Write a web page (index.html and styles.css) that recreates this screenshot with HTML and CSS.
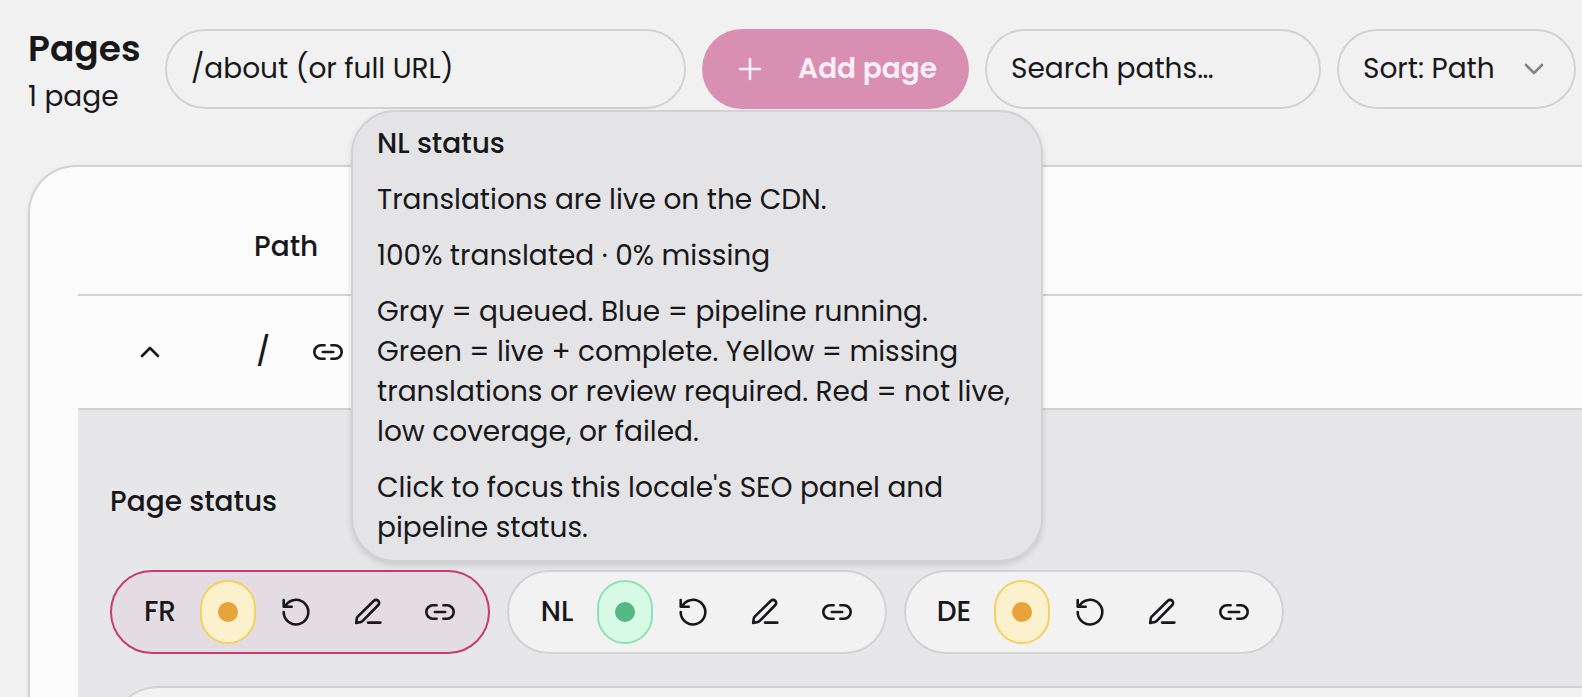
FILE: index.html
```html
<!DOCTYPE html>
<html lang="en">
<head>
    <meta charset="UTF-8">
    <meta name="viewport" content="width=device-width, initial-scale=1.0">
    <title>Pages</title>
    <link rel="stylesheet" href="styles.css">
</head>
<body>
    <!-- Shared icons -->
    <svg class="icon-defs" aria-hidden="true">
        <symbol id="icon-link" viewBox="0 0 32 32">
            <path d="M12.6 9.3H9a6.7 6.7 0 0 0 0 13.4h3.6M19.4 9.3H23a6.7 6.7 0 0 1 0 13.4h-3.6M10.8 16h10.4"/>
        </symbol>
        <symbol id="icon-retry" viewBox="0 0 32 32">
            <path d="M3.7 4v6.8h8M5 10.6A12.3 12.3 0 1 1 3.7 16"/>
        </symbol>
        <symbol id="icon-edit" viewBox="0 0 32 32">
            <path d="M4.2 27l.6-4.6c.1-.7.4-1.3.9-1.8L21.9 4.8a3 3 0 0 1 4.4 4.2L10.5 25.2c-.5.5-1.1.8-1.8.9zM16 26.6h12.4"/>
        </symbol>
    </svg>

    <header class="toolbar">
        <div class="heading">
            <h1>Pages</h1>
            <p>1 page</p>
        </div>
        <input class="field field-url" type="text" aria-label="Page path" placeholder="/about (or full URL)">
        <button class="add-button" type="button">
            <svg class="icon" viewBox="0 0 32 32"><path d="M16 6v20M6 16h20"/></svg>
            Add page
        </button>
        <input class="field field-search" type="text" aria-label="Search paths" placeholder="Search paths…">
        <div class="sort">
            <select class="field" aria-label="Sort">
                <option>Sort: Path</option>
            </select>
            <svg class="icon" viewBox="0 0 32 32"><path d="M8 12l8 8 8-8"/></svg>
        </div>
    </header>

    <main class="card">
        <table class="pages-table">
            <thead>
                <tr>
                    <th class="col-toggle"></th>
                    <th>Path</th>
                </tr>
            </thead>
            <tbody>
                <tr class="page-row">
                    <td class="col-toggle">
                        <button class="icon-button" type="button" aria-label="Collapse">
                            <svg class="icon" viewBox="0 0 32 32"><path d="M8 20l8-8 8 8"/></svg>
                        </button>
                    </td>
                    <td>
                        <div class="path">
                            <span>/</span>
                            <a class="icon-button" href="#" aria-label="Open page"><svg class="icon"><use href="#icon-link"/></svg></a>
                        </div>
                    </td>
                </tr>
                <tr>
                    <td class="details" colspan="2">
                        <h2>Page status</h2>
                        <div class="locales">
                            <div class="locale active">
                                <button class="locale-name" type="button">FR</button>
                                <button class="status yellow" type="button" aria-label="FR status"></button>
                                <button class="icon-button" type="button" aria-label="Retry FR"><svg class="icon"><use href="#icon-retry"/></svg></button>
                                <button class="icon-button" type="button" aria-label="Edit FR"><svg class="icon"><use href="#icon-edit"/></svg></button>
                                <a class="icon-button" href="#" aria-label="Open FR"><svg class="icon"><use href="#icon-link"/></svg></a>
                            </div>
                            <div class="locale">
                                <button class="locale-name" type="button">NL</button>
                                <button class="status green" type="button" aria-label="NL status" aria-describedby="nl-tooltip"></button>
                                <button class="icon-button" type="button" aria-label="Retry NL"><svg class="icon"><use href="#icon-retry"/></svg></button>
                                <button class="icon-button" type="button" aria-label="Edit NL"><svg class="icon"><use href="#icon-edit"/></svg></button>
                                <a class="icon-button" href="#" aria-label="Open NL"><svg class="icon"><use href="#icon-link"/></svg></a>
                                <div class="tooltip" id="nl-tooltip" role="tooltip">
                                    <p class="tooltip-title">NL status</p>
                                    <p>Translations are live on the CDN.</p>
                                    <p>100% translated · 0% missing</p>
                                    <p>Gray = queued. Blue = pipeline running. Green = live + complete. Yellow = missing translations or review required. Red = not live, low coverage, or failed.</p>
                                    <p>Click to focus this locale's SEO panel and pipeline status.</p>
                                </div>
                            </div>
                            <div class="locale">
                                <button class="locale-name" type="button">DE</button>
                                <button class="status yellow" type="button" aria-label="DE status"></button>
                                <button class="icon-button" type="button" aria-label="Retry DE"><svg class="icon"><use href="#icon-retry"/></svg></button>
                                <button class="icon-button" type="button" aria-label="Edit DE"><svg class="icon"><use href="#icon-edit"/></svg></button>
                                <a class="icon-button" href="#" aria-label="Open DE"><svg class="icon"><use href="#icon-link"/></svg></a>
                            </div>
                        </div>
                        <div class="panel"></div>
                    </td>
                </tr>
            </tbody>
        </table>
    </main>
</body>
</html>
```
FILE: styles.css
```css
* {
    box-sizing: border-box;
    margin: 0;
    padding: 0;
}
body {
    height: 100vh;
    overflow: hidden;
    background: #f1f1f1;
    color: #18181b;
    font-family: Poppins, Inter, sans-serif;
    font-size: 28px;
    line-height: 40px;
}
button, input, select {
    font: inherit;
    color: inherit;
}
button {
    border: none;
    background: none;
    cursor: pointer;
}
a {
    color: inherit;
}
.icon-defs {
    position: absolute;
    width: 0;
    height: 0;
}
.icon {
    display: block;
    flex: none;
    width: 32px;
    height: 32px;
    fill: none;
    stroke: currentColor;
    stroke-width: 2.6;
    stroke-linecap: round;
    stroke-linejoin: round;
}

/* Toolbar */
.toolbar {
    display: flex;
    align-items: flex-start;
    gap: 16px;
    padding: 29px 6px 0 28px;
}
.heading {
    flex: none;
    width: 121px;
    height: 80px;
}
.heading h1 {
    font-size: 36px;
    font-weight: 600;
}
.heading p {
    padding-top: 8px;
}
.field {
    min-width: 0;
    height: 80px;
    padding: 0 24px;
    border: 2px solid #d2d2d2;
    border-radius: 40px;
    background: #f1f1f1;
    outline: none;
}
.field::placeholder {
    color: #18181b;
    opacity: 1;
}
.field-url {
    flex: 1 1 520px;
}
.field-search {
    flex: 0 1 336px;
}
.add-button {
    display: flex;
    flex: none;
    align-items: center;
    gap: 32px;
    height: 80px;
    padding: 0 32px;
    border-radius: 40px;
    background: #d88fb2;
    color: #fbeef5;
    font-weight: 600;
}
.sort {
    position: relative;
    flex: none;
    width: 239px;
}
.sort .field {
    width: 100%;
    appearance: none;
}
.sort .icon {
    position: absolute;
    top: 24px;
    right: 26px;
    color: #858585;
    pointer-events: none;
}

/* The card runs on past the right edge of the window */
.card {
    margin: 56px 0 0 28px;
    padding: 32px 0 0 48px;
    border: 2px solid #d2d2d2;
    border-right: none;
    border-radius: 48px 0 0 0;
    background: #fbfbfb;
    box-shadow: 0 1px 4px rgba(0, 0, 0, 0.08);
}
.pages-table {
    width: 100%;
    border-collapse: separate;
    border-spacing: 0;
}
.pages-table th {
    height: 97px;
    padding: 0 32px;
    border-bottom: 2px solid #d2d2d2;
    font-weight: 500;
    text-align: left;
}
.page-row td {
    height: 114px;
    padding: 0 32px;
    border-bottom: 2px solid #d2d2d2;
}
.pages-table .col-toggle {
    width: 144px;
    padding: 0 40px;
}
.icon-button {
    display: flex;
    align-items: center;
    justify-content: center;
    width: 64px;
    height: 64px;
}
.path {
    display: flex;
    align-items: center;
    gap: 26px;
    padding-left: 2px;
    font-weight: 500;
}

/* Expanded row */
.details {
    padding: 72px 0 0 32px;
    background: #e7e7e9;
}
.details h2 {
    margin-bottom: 48px;
    font-size: 28px;
    font-weight: 500;
}
.locales {
    display: flex;
    gap: 17px;
}
.locale {
    position: relative;
    display: flex;
    align-items: center;
    gap: 8px;
    height: 84px;
    padding: 0 16px;
    border: 2px solid #d2d2d4;
    border-radius: 42px;
    background: #f2f2f2;
}
.locale.active {
    border-color: #c43c70;
    background: #e4dce3;
}
.locale-name {
    width: 64px;
    font-weight: 500;
}
.status {
    display: flex;
    align-items: center;
    justify-content: center;
    width: 56px;
    height: 64px;
    border: 2px solid;
    border-radius: 28px;
}
.status::before {
    content: "";
    width: 20px;
    height: 20px;
    border-radius: 50%;
}
.status.yellow {
    border-color: #f3d260;
    background: #fcf1cd;
}
.status.yellow::before {
    background: #e8a33a;
}
.status.green {
    border-color: #8fe0bb;
    background: #d6fae4;
}
.status.green::before {
    background: #56b686;
}
.panel {
    height: 120px;
    margin-top: 32px;
    border: 2px solid #d2d2d4;
    border-right: none;
    border-radius: 48px 0 0 48px;
    background: #f2f2f2;
}

/* Tooltip */
.tooltip {
    position: absolute;
    bottom: calc(100% + 10px);
    left: 50%;
    display: flex;
    flex-direction: column;
    gap: 16px;
    width: 692px;
    padding: 12px 24px;
    border: 2px solid #d2d2d3;
    border-radius: 44px;
    background: #e4e4e6;
    box-shadow: 0 3px 6px rgba(0, 0, 0, 0.13);
    transform: translateX(-50%);
}
.tooltip-title {
    font-weight: 500;
}
```
